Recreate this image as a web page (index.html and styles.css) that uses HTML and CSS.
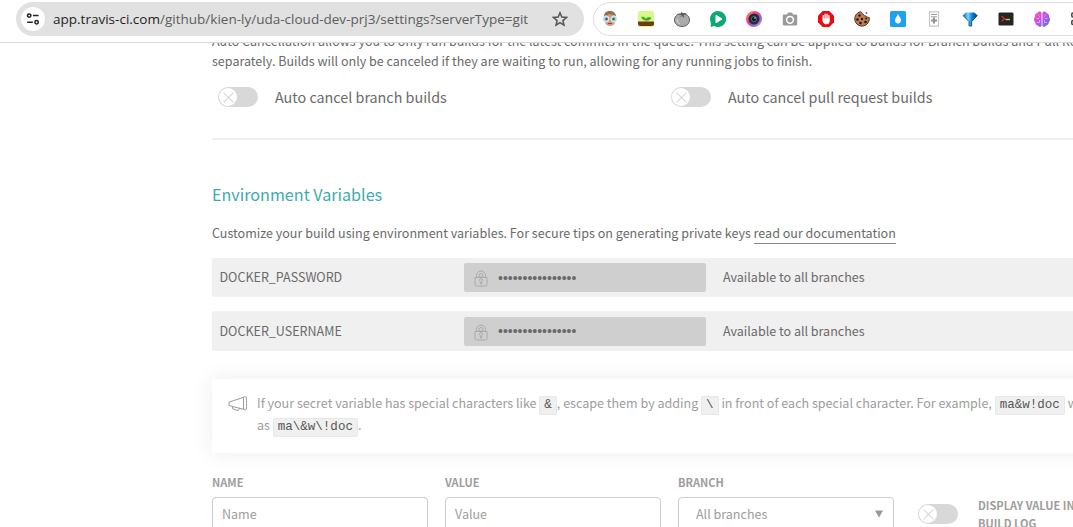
FILE: index.html
```
<!DOCTYPE html>
<html lang="en">
<head>
<meta charset="utf-8">
<title>Travis CI settings</title>
<link rel="stylesheet" href="styles.css">
</head>
<body>
<header class="toolbar">
  <div class="address">
    <span class="site-info">
      <svg width="14" height="14" viewBox="0 0 14 14" fill="none" stroke="#222" stroke-width="1.5"><circle cx="3.2" cy="3.6" r="1.7"/><path d="M7 3.6h5.6M1.2 10.2h5.6"/><circle cx="10.6" cy="10.2" r="1.7"/></svg>
    </span>
    <span class="url"><b>app.travis-ci.com</b>/github/kien-ly/uda-cloud-dev-prj3/settings?serverType=git</span>
    <svg class="star" width="16" height="16" viewBox="0 0 16 16" fill="none" stroke="#555" stroke-width="1.5"><path d="M8 1.8l1.8 4.3 4.7.4-3.6 3.1 1.1 4.6L8 11.7l-4 2.5 1.1-4.6L1.500 6.500l4.700-.4z"/></svg>
  </div>
  <div class="extensions">
    <svg viewBox="0 0 16 16"><path d="M2 6C2 1.500 5 0 8 0s6 2 6 6l-.5 5C12 14 10 15 8 15s-4-1-5.500-4z" fill="#d29a78"/><path d="M2 6C2 1.500 5 0 8 0s6 2 6 6l-2-2-5-1-3 2z" fill="#8a7355"/><circle cx="4" cy="8" r="3.100" fill="#a9d0de" stroke="#e8f1f3"/><circle cx="12" cy="8" r="3.100" fill="#a9d0de" stroke="#e8f1f3"/><circle cx="4.500" cy="8" r="1.200" fill="#345a68"/><circle cx="11.500" cy="8" r="1.200" fill="#345a68"/><path d="M6 12.500h4" stroke="#8e4d3b"/></svg>
    <svg viewBox="0 0 16 16"><rect width="16" height="16" rx="2" fill="#d5fa8c"/><path d="M0 10.500h16V13a2 2 0 0 1-2 2H2a2 2 0 0 1-2-2z" fill="#713b12"/><path d="M8 10.500V8M8 9C5 9 4 7.500 3.500 6 6 6 8 7 8 9zM8 9c0-2 2-3 5-2-1 2-3 2.500-5 2z" fill="#43a51d" stroke="#43a51d" stroke-width=".7"/></svg>
    <svg viewBox="0 0 16 16"><path d="M8 3.500C12 2 15.500 5 15.500 9S12 15.500 8 15.500.5 13 .5 9 4 2 8 3.500z" fill="#aaa" stroke="#555" stroke-width=".9"/><path d="M8 4L3 3l4-.5L7.500.5l1.200 1.800L13 2 9.500 4l1 3L8 5 5 7z" fill="#555"/><path d="M3 8c0 3 1 4 3 5" fill="none" stroke="#ddd"/></svg>
    <svg viewBox="0 0 16 16"><path d="M8 0a8 8 0 1 1-3.800 15L.8 16V11.500A8 8 0 0 1 8 0z" fill="#0caa70"/><path d="M6 4.200l6 3.800-6 3.800z" fill="#fff" stroke="#fff" stroke-linejoin="round"/></svg>
    <svg viewBox="0 0 16 16"><defs><linearGradient id="lens" x1="0" y1="0" x2="1" y2="1"><stop offset="0" stop-color="#ff9b4b"/><stop offset=".4" stop-color="#f43b8b"/><stop offset=".7" stop-color="#8c63ed"/><stop offset="1" stop-color="#ffc66f"/></linearGradient></defs><circle cx="8" cy="8" r="8" fill="url(#lens)"/><circle cx="8" cy="8" r="5.500" fill="#252d3b"/><circle cx="8" cy="8" r="2.600" fill="#10151c" stroke="#53667a"/><circle cx="9" cy="7" r="1" fill="#7ca7ba"/></svg>
    <svg viewBox="0 0 16 16"><path d="M5 3.500l1-2h4l1 2h3c.7 0 1.200.5 1.200 1.200v8.600c0 .7-.5 1.200-1.200 1.200H2c-.7 0-1.200-.5-1.200-1.200V4.700c0-.7.500-1.200 1.200-1.200z" fill="#999"/><circle cx="8" cy="8.800" r="3.400" fill="none" stroke="#fff" stroke-width="1.500"/></svg>
    <svg viewBox="0 0 16 16"><path d="M4.700 0h6.600L16 4.700v6.600L11.300 16H4.700L0 11.300V4.700z" fill="#e40d12"/><path d="M5.200 8V4.600M7.100 8V3.200M9 8V3.200M10.900 9V4.700" stroke="#fff" stroke-width="1.300" stroke-linecap="round"/><path d="M4.600 7.500h7v2.800c0 2-1 3-3 3s-3.300-.8-4.200-3.300z" fill="#fff"/></svg>
    <svg viewBox="0 0 16 16"><path d="M6.500.7c1.500 0 1 2 2.500 2.300C10 5 11 5 12 4.800c.5 1.500 2 1.500 3.200 1.700A7.300 7.300 0 1 1 6.500.7z" fill="#bd7c54" stroke="#47291d" stroke-width=".9"/><g fill="#25170f"><circle cx="5.500" cy="4.500" r="1.200"/><circle cx="3.500" cy="8.500" r="1.300"/><circle cx="8" cy="8" r="1.200"/><circle cx="6.500" cy="12" r="1.300"/><circle cx="11.500" cy="11" r="1.300"/><circle cx="12" cy="7.500" r=".9"/><circle cx="12.500" cy="2" r=".8"/></g></svg>
    <svg viewBox="0 0 16 16"><rect width="16" height="16" rx="1.500" fill="#1da1f2"/><path d="M8 3c1 2.300 3 4 3 6.300A2.900 2.900 0 0 1 8 12.500a2.900 2.900 0 0 1-3-3.200C5 7 7 5.300 8 3z" fill="#fff"/></svg>
    <svg viewBox="0 0 16 16" fill="none"><path d="M3.500.8h9v14.400h-9z" stroke="#c8c8c8" stroke-width="1.200"/><path d="M5 3.500h6M5 5.800h6" stroke="#999"/><path d="M8 6.500v6M5 9.500h6" stroke="#909090" stroke-width="2"/></svg>
    <svg viewBox="0 0 16 16"><defs><linearGradient id="gem"><stop offset="0" stop-color="#0b65ad"/><stop offset=".35" stop-color="#7bd8ff"/><stop offset=".6" stop-color="#0b88e5"/><stop offset="1" stop-color="#073b72"/></linearGradient></defs><path d="M3.500 1.500h9L15.500 4.500 9.700 10.500V15H7v-4.500L1 4.500z" fill="url(#gem)"/><path d="M15.300 4.500L9.700 10.500V15H7v-4.500L1 4.500" fill="none" stroke="#083b66" stroke-width=".8"/></svg>
    <svg viewBox="0 0 16 16"><rect x=".5" y="1.500" width="15" height="13" rx="1.300" fill="#252525"/><path d="M3.500 5l3 2.700-3 2.700" fill="none" stroke="#d93224" stroke-width="1.200"/><path d="M7.500 8.500H12" stroke="#ebbd40" stroke-width="1.300"/></svg>
    <svg viewBox="0 0 16 16"><defs><linearGradient id="brain" x1="0" y1="0" x2="1" y2="1"><stop offset="0" stop-color="#ff4da5"/><stop offset=".5" stop-color="#bf55ee"/><stop offset="1" stop-color="#347cf3"/></linearGradient></defs><path d="M7.600 2C7 0 4 0 3.500 2 1 2.500.8 4.500 1 6c-1.500 1.500-1.300 4 .2 5.200 0 2 1.300 3.200 2.800 3.200 1 2 3.600 1.500 3.600 0zM8.400 2C9 0 12 0 12.500 2c2.500.5 2.700 2.500 2.500 4 1.500 1.500 1.300 4-.2 5.200 0 2-1.300 3.200-2.800 3.200-1 2-3.600 1.500-3.600 0z" fill="url(#brain)"/><path d="M4 3.500l1.500 2M2.500 7.500H5M5.500 9v3M3 11.500h2M12 3.500l-1.500 2M13.500 7.500H11M10.500 9v3M13 11.500h-2" stroke="#fff" stroke-width=".45"/></svg>
    <svg viewBox="0 0 16 16" fill="none" stroke="#444" stroke-width="1.500"><rect x="1.800" y="2" width="4" height="4" rx="1"/><rect x="1.800" y="9.500" width="4" height="4" rx="1"/><path d="M10 2h4v4h-4zM10 10h4v4h-4z"/></svg>
  </div>
</header>
<main class="page">
  <p class="intro">Auto Cancellation allows you to only run builds for the latest commits in the queue. This setting can be applied to builds for Branch builds and Pull Requests<br>separately. Builds will only be canceled if they are waiting to run, allowing for any running jobs to finish.</p>
  <div class="switches">
    <label class="switch-item"><span class="switch"><i><svg viewBox="0 0 12 12"><path d="M1.500 1.500l9 9m0-9l-9 9"/></svg></i></span><span>Auto cancel branch builds</span></label>
    <label class="switch-item"><span class="switch"><i><svg viewBox="0 0 12 12"><path d="M1.500 1.500l9 9m0-9l-9 9"/></svg></i></span><span>Auto cancel pull request builds</span></label>
  </div>
  <section class="variables">
    <h2>Environment Variables</h2>
    <p class="description">Customize your build using environment variables. For secure tips on generating private keys <a>read our documentation</a></p>
    <div class="variable">
      <span class="variable-name">DOCKER_PASSWORD</span>
      <span class="secret"><svg width="14" height="17" viewBox="0 0 14 17"><path d="M1 7.500h12v7c0 1-.5 1.500-1.500 1.500h-9C1.500 16 1 15.500 1 14.500zM2.500 7V5.500a4.500 4.500 0 0 1 9 0V7M5 7V5.500a2 2 0 0 1 4 0V7zM6.300 11.500a1.500 1.500 0 1 1 1.400 0V14H6.300z"/></svg><span class="dots">••••••••••••••••</span></span>
      <span class="scope">Available to all branches</span>
    </div>
    <div class="variable second">
      <span class="variable-name">DOCKER_USERNAME</span>
      <span class="secret"><svg width="14" height="17" viewBox="0 0 14 17"><path d="M1 7.500h12v7c0 1-.5 1.500-1.500 1.500h-9C1.500 16 1 15.500 1 14.500zM2.500 7V5.500a4.500 4.500 0 0 1 9 0V7M5 7V5.500a2 2 0 0 1 4 0V7zM6.300 11.500a1.500 1.500 0 1 1 1.400 0V14H6.300z"/></svg><span class="dots">••••••••••••••••</span></span>
      <span class="scope">Available to all branches</span>
    </div>
    <div class="notice">
      <svg width="20" height="16" viewBox="0 0 20 16"><path d="M1 6.200L15.500 1.300v12L1 9.500zM15.500 1.300c.3-.7 2.500-.7 2.800 0 .4 3.500.4 8.500 0 12-.3.700-2.500.7-2.800 0M4.500 10.500v2.200l5.500 2 1.500-2.500"/></svg>
      <p>If your secret variable has special characters like <code>&amp;</code>, escape them by adding <code>\</code> in front of each special character. For example, <code>ma&amp;w!doc</code> would<br>as <code>ma\&amp;w\!doc</code>.</p>
    </div>
    <form class="new-variable">
      <label class="field"><span>NAME</span><span class="box">Name</span></label>
      <label class="field"><span>VALUE</span><span class="box">Value</span></label>
      <label class="field"><span>BRANCH</span><span class="box select">All branches<svg width="10" height="8" viewBox="0 0 10 8"><path d="M1 .5h8L5 7.500z" fill="#999"/></svg></span></label>
      <label class="log-option"><span class="switch"><i><svg viewBox="0 0 12 12"><path d="M1.500 1.500l9 9m0-9l-9 9"/></svg></i></span><span>DISPLAY VALUE IN<br>BUILD LOG</span></label>
    </form>
  </section>
</main>
</body>
</html>
```
FILE: styles.css
```
* { box-sizing: border-box; }
body { margin: 0; height: 527px; overflow: hidden; background: #fff; color: #6a6a6a; font: 12.54px/20px "Noto Sans CJK SC", sans-serif; }
p, h2 { margin: 0; }
svg { display: block; flex: none; }
.toolbar { height: 43px; display: flex; align-items: flex-start; gap: 9px; padding: 2px 0 0 16px; border-bottom: 1px solid #d8d8d8; overflow: hidden; }
.address { width: 568px; height: 34px; flex: none; display: flex; align-items: center; border-radius: 17px; background: #e1e1e1; padding-left: 5px; }
.site-info { width: 24px; height: 24px; flex: none; display: flex; align-items: center; justify-content: center; background: #fff; border-radius: 50%; }
.url { width: 507px; flex: none; padding-left: 8px; color: #5c5c5c; font: 13.53px/20px "Open Sans", sans-serif; white-space: nowrap; }
.url b { font-weight: 400; color: #1f1f1f; }
.extensions { flex: none; width: 520px; height: 34px; display: flex; align-items: center; gap: 20px; padding-left: 8px; border: 1px solid #ddd; border-radius: 17px; }
.extensions svg { width: 16px; height: 16px; }
.page { height: 484px; overflow: hidden; padding-left: 212px; }
.intro { margin-top: -12px; white-space: nowrap; }
.switches { display: flex; margin: 16px 0 31px 6px; }
.switch-item { width: 453px; flex: none; display: flex; align-items: center; gap: 17px; font-size: 14.33px; line-height: 20px; }
.switch { width: 40px; height: 20px; flex: none; display: block; padding: 1px; border-radius: 10px; background: #d8d8d8; }
.switch i { width: 18px; height: 18px; display: flex; align-items: center; justify-content: center; border-radius: 50%; background: #fff; }
.switch svg { width: 13px; height: 13px; fill: none; stroke: #d8d8d8; stroke-width: 1; }
.variables { border-top: 2px solid #efefef; padding-top: 42px; }
h2 { color: #3eaaaf; font-size: 16.15px; line-height: 24px; font-weight: 400; }
.description { margin-top: 17px; height: 21px; white-space: nowrap; }
.description a { display: inline-block; height: 21px; border-bottom: 1px solid #888; }
.variable { height: 39px; margin-top: 14px; display: flex; align-items: center; padding-left: 7.500px; border-radius: 2px 0 0 2px; background: #f0f0f0; white-space: nowrap; }
.variable.second { height: 40px; }
.variable-name, .scope { padding-bottom: 1px; }
.variable-name { width: 244.500px; }
.secret { width: 242px; height: 29px; margin-right: 17px; display: flex; align-items: center; gap: 10px; padding-left: 10px; border-radius: 2px; background: #cfcfcf; }
.secret svg { margin-top: 2px; fill: none; stroke: #aaa; stroke-width: 1; }
.dots { font: 14px/20px "Liberation Sans", sans-serif; }
.notice { height: 74px; margin: 28px -40px 0 0; display: flex; gap: 10px; padding: 13px 0 0 16px; box-shadow: 0 0 20px rgba(0, 0, 0, .08); color: #9d9d9d; line-height: 22px; white-space: nowrap; }
.notice svg { margin: 4px -1px 0 0; fill: none; stroke: #999; stroke-width: 1; }
code { padding: 1px 4px 2px; border: 1px solid #e8e8e8; border-radius: 2px; background: #f0f0f0; color: #555; font: 12.54px/16px "Liberation Mono", monospace; }
.new-variable { display: flex; gap: 17px; margin-top: 21px; }
.field { width: 216px; flex: none; color: #9d9d9d; }
.field > span:first-child { display: block; height: 23px; line-height: 16px; font-size: 11px; font-weight: 700; }
.box { height: 36px; display: flex; align-items: center; padding: 0 9px 2px; border: 1px solid #ccc; border-radius: 4px; }
.box.select { padding-left: 17px; justify-content: space-between; }
.log-option { display: flex; gap: 20px; padding: 22px 0 0 7px; color: #9d9d9d; font-size: 11px; font-weight: 700; line-height: 18px; white-space: nowrap; }
.log-option .switch { margin-top: 8px; }
```
